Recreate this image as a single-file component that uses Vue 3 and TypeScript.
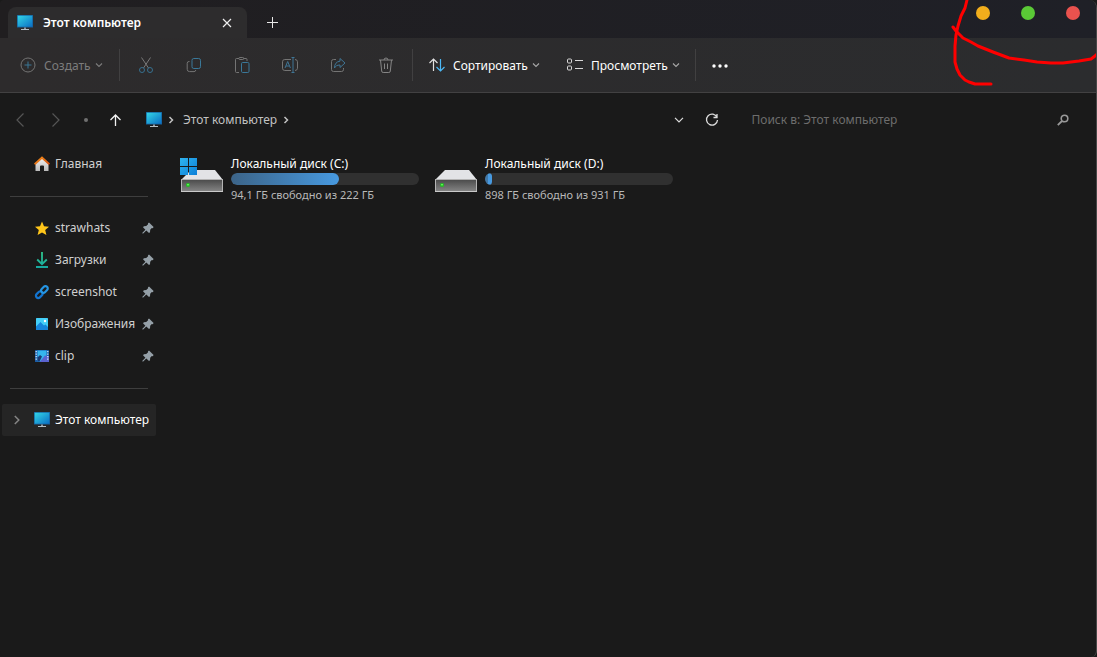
<script setup lang="ts">
import { ref } from 'vue'

interface Place {
  id: string
  label: string
}

interface Drive {
  id: string
  name: string
  free: string
  used: number
  system: boolean
}

const search = ref('')

const pinned: Place[] = [
  { id: 'star', label: 'strawhats' },
  { id: 'download', label: 'Загрузки' },
  { id: 'link', label: 'screenshot' },
  { id: 'pictures', label: 'Изображения' },
  { id: 'film', label: 'clip' },
]

const drives: Drive[] = [
  { id: 'c', name: 'Локальный диск (C:)', free: '94,1 ГБ свободно из 222 ГБ', used: 57.6, system: true },
  { id: 'd', name: 'Локальный диск (D:)', free: '898 ГБ свободно из 931 ГБ', used: 3.5, system: false },
]
</script>

<template>
  <div class="window">
    <svg class="defs" width="0" height="0" aria-hidden="true">
      <defs>
        <linearGradient id="g-screen" x1="0" y1="0" x2="1" y2="1">
          <stop offset="0" stop-color="#33d6e6" />
          <stop offset="1" stop-color="#0b6fc4" />
        </linearGradient>
        <linearGradient id="g-teal" x1="0" y1="0" x2="0" y2="1">
          <stop offset="0" stop-color="#2fc88c" />
          <stop offset="1" stop-color="#18a9a0" />
        </linearGradient>
        <linearGradient id="g-house" x1="0" y1="0" x2="0" y2="1">
          <stop offset="0" stop-color="#f2f2f2" />
          <stop offset="1" stop-color="#b9b9b9" />
        </linearGradient>
        <linearGradient id="g-roof" x1="0" y1="0" x2="1" y2="1">
          <stop offset="0" stop-color="#f99a1c" />
          <stop offset="1" stop-color="#d0470f" />
        </linearGradient>
        <linearGradient id="g-drive" x1="0" y1="0" x2="0" y2="1">
          <stop offset="0" stop-color="#4a4a4a" />
          <stop offset="1" stop-color="#858585" />
        </linearGradient>
        <linearGradient id="g-win" x1="0" y1="0" x2="1" y2="1">
          <stop offset="0" stop-color="#2fb4f0" />
          <stop offset="1" stop-color="#0b7fd8" />
        </linearGradient>
        <symbol id="s-monitor" viewBox="0 0 16 16">
          <rect x="0" y="0" width="16" height="12.5" fill="#155f9c" />
          <rect x="0.7" y="0.7" width="14.6" height="11" fill="url(#g-screen)" />
          <path d="M7 12.5h2v1.500H7z" fill="#8795a0" />
          <path d="M4 14h8v1H4z" fill="#b4bdc4" />
        </symbol>
        <symbol id="s-down" viewBox="0 0 8 8">
          <path d="M1 2.5 4 5.5 7 2.5" fill="none" stroke="currentColor" stroke-width="1.1" />
        </symbol>
        <symbol id="s-right" viewBox="0 0 8 8">
          <path d="M2.5 1 5.5 4 2.5 7" fill="none" stroke="currentColor" stroke-width="1.5" />
        </symbol>
        <symbol id="s-pin" viewBox="0 0 12 12">
          <path d="M7 0.5 11.6 5.1 10.8 6.2 9.8 6 8.2 7.8 8 10.2 7 11 4.3 8.6 1.2 11.5 0.4 11.5 0.4 10.8 3.4 7.7 1 5.2 1.9 4.2 4.2 4 6.1 2.3 5.9 1.4Z" fill="#95a0a8" />
        </symbol>
      </defs>
    </svg>

    <header class="titlebar">
      <div class="tab">
        <svg class="icon16"><use href="#s-monitor" /></svg>
        <span class="tab-title">Этот компьютер</span>
        <button class="tab-close" aria-label="Закрыть вкладку">
          <svg width="10" height="10" viewBox="0 0 10 10"><path d="M1 1 9 9M9 1 1 9" stroke="#eee" stroke-width="1.2" /></svg>
        </button>
      </div>
      <button class="tab-new" aria-label="Новая вкладка">
        <svg width="11" height="11" viewBox="0 0 11 11"><path d="M5.5 0v11M0 5.5h11" stroke="#e8e8e8" /></svg>
      </button>
      <div class="controls">
        <button class="dot yellow" aria-label="Свернуть"></button>
        <button class="dot green" aria-label="Развернуть"></button>
        <button class="dot red" aria-label="Закрыть"></button>
      </div>
    </header>

    <div class="toolbar" role="toolbar" aria-label="Команды">
      <button class="command create">
        <svg class="icon16" viewBox="0 0 16 16" fill="none">
          <circle cx="8" cy="8" r="7" stroke="#747474" /><path d="M8 4.5v7M4.5 8h7" stroke="#3b7695" />
        </svg>
        <span>Создать</span>
        <svg class="chevron"><use href="#s-down" /></svg>
      </button>
      <span class="divider"></span>
      <div class="tools">
        <button class="tool" aria-label="Вырезать">
          <svg class="icon16" viewBox="0 0 16 16" fill="none">
            <path d="M3.5 0.5 10.5 11M12.5 0.5 5.5 11" stroke="#787878" />
            <circle cx="4" cy="13" r="2.5" stroke="#37708f" /><circle cx="12" cy="13" r="2.5" stroke="#37708f" />
          </svg>
        </button>
        <button class="tool" aria-label="Копировать">
          <svg class="icon16" viewBox="0 0 16 16" fill="none">
            <path d="M3.5 4.5H3A1.8 1.8 0 0 0 1.2 6.3v6A2.3 2.3 0 0 0 3.5 14.6H8A1.8 1.8 0 0 0 9.8 13" stroke="#747474" />
            <rect x="6" y="1.5" width="8.5" height="10" rx="1.8" stroke="#3a7899" />
          </svg>
        </button>
        <button class="tool" aria-label="Вставить">
          <svg class="icon16" viewBox="0 0 16 16" fill="none">
            <path d="M5 1.5H2.5a1 1 0 0 0-1 1v12a1 1 0 0 0 1 1H5M9.5 1.5H12a1 1 0 0 1 1 1V4M4.8 1.5a1 1 0 0 1 1-1h3a1 1 0 0 1 1 1 1 1 0 0 1-1 1h-3a1 1 0 0 1-1-1Z" stroke="#747474" />
            <rect x="7.5" y="5.5" width="7.5" height="10" rx="1.2" stroke="#3a7899" />
          </svg>
        </button>
        <button class="tool" aria-label="Переименовать">
          <svg class="icon16" viewBox="0 0 16 16" fill="none">
            <path d="M9 2.5H2.8A2.3 2.3 0 0 0 .5 4.8v6.4A2.3 2.3 0 0 0 2.8 13.5H9M13 2.5a2.5 2.5 0 0 1 2.5 2.3v6.4a2.5 2.5 0 0 1-2.5 2.3" stroke="#747474" />
            <path d="M3 11 5.7 4.5 8.4 11M4 9h3.4M11 .5v15M9.5 .5h3M9.5 15.5h3" stroke="#3f7595" />
          </svg>
        </button>
        <button class="tool" aria-label="Поделиться">
          <svg class="icon16" viewBox="0 0 16 16" fill="none">
            <path d="M6 2.5H3.5A2 2 0 0 0 1.5 4.5v8a2 2 0 0 0 2 2h8a2 2 0 0 0 2-2V11" stroke="#747474" />
            <path d="M10 1.5 15 6 10 10.5V8C7 8 5.5 9 4.5 11 4.5 7 6.5 4.5 10 4.2Z" stroke="#3f7595" />
          </svg>
        </button>
        <button class="tool" aria-label="Удалить">
          <svg class="icon16" viewBox="0 0 16 16" fill="none">
            <path d="M1 3h14M6 3a2 2 0 0 1 4 0M2.5 3l1.2 11a1.5 1.5 0 0 0 1.5 1.5h5.6a1.5 1.5 0 0 0 1.5-1.5L13.5 3M6.5 6.5v5.5M9.5 6.5v5.5" stroke="#858585" />
          </svg>
        </button>
      </div>
      <span class="divider"></span>
      <button class="command bright sort">
        <svg class="icon16" viewBox="0 0 16 16" fill="none">
          <path d="M4.5 14V2M.5 6 4.5 2 8.5 6" stroke="#e0e0e0" stroke-width="1.2" />
          <path d="M11.5 2v12M7.5 10l4 4 4-4" stroke="#4cb8f5" stroke-width="1.2" />
        </svg>
        <span>Сортировать</span>
        <svg class="chevron"><use href="#s-down" /></svg>
      </button>
      <button class="command bright view">
        <svg class="icon16" viewBox="0 0 16 16" fill="none">
          <rect x=".5" y="2" width="4" height="4" rx="1" stroke="#d8d8d8" /><rect x=".5" y="9" width="4" height="4" rx="1" stroke="#d8d8d8" />
          <path d="M8 3.5h8M8 11.5h8" stroke="#d8d8d8" />
        </svg>
        <span>Просмотреть</span>
        <svg class="chevron"><use href="#s-down" /></svg>
      </button>
      <span class="divider"></span>
      <button class="tool" aria-label="Подробнее">
        <svg width="18" height="16" viewBox="0 0 18 16" fill="#fff"><circle cx="3" cy="9" r="1.7" /><circle cx="9" cy="9" r="1.7" /><circle cx="15" cy="9" r="1.7" /></svg>
      </button>
    </div>

    <nav class="navbar" aria-label="Навигация">
      <div class="history">
        <button class="step" aria-label="Назад"><svg width="8" height="14" viewBox="0 0 8 14"><path d="M7.5 .5 1 7l6.5 6.5" fill="none" stroke="#555" stroke-width="1.2" /></svg></button>
        <button class="step" aria-label="Вперёд"><svg width="8" height="14" viewBox="0 0 8 14"><path d="M.5 .5 7 7 .5 13.5" fill="none" stroke="#555" stroke-width="1.2" /></svg></button>
        <button class="step small" aria-label="Последние расположения"><span class="recent"></span></button>
        <button class="step" aria-label="Вверх"><svg width="12" height="12" viewBox="0 0 12 12"><path d="M5.500 12V1M.5 6l5-5 5 5" fill="none" stroke="#f2f2f2" stroke-width="1.3" /></svg></button>
      </div>
      <div class="address">
        <svg class="icon16"><use href="#s-monitor" /></svg>
        <svg class="chevron"><use href="#s-right" /></svg>
        <a class="crumb" href="#">Этот компьютер</a>
        <svg class="chevron"><use href="#s-right" /></svg>
        <button class="expand" aria-label="Предыдущие расположения"><svg width="10" height="6" viewBox="0 0 10 6"><path d="M1 .8 5 4.8 9 .8" fill="none" stroke="#ddd" stroke-width="1.2" /></svg></button>
        <button class="refresh" aria-label="Обновить"><svg width="14" height="14" viewBox="0 0 14 14"><path d="M12 4.3A5.5 5.5 0 1 0 12.5 7M12 1v3.5H8.5" fill="none" stroke="#ddd" stroke-width="1.3" /></svg></button>
      </div>
      <label class="search">
        <input v-model="search" type="text" aria-label="Поиск" placeholder="Поиск в: Этот компьютер" />
        <svg width="12" height="12" viewBox="0 0 12 12" fill="none" stroke="#999"><circle cx="7.5" cy="4.5" r="3.3" stroke-width="1.6" /><path d="M5 7 .8 11.2" stroke-width="1.8" /></svg>
      </label>
    </nav>

    <div class="content">
      <aside class="sidebar">
        <a class="place" href="#">
          <svg class="icon16" viewBox="0 0 16 16">
            <path d="M1.5 7.5 8 2l6.5 5.5V15H10v-4.5a1 1 0 0 0-1-1H7a1 1 0 0 0-1 1V15H1.5Z" fill="url(#g-house)" />
            <path d="M8 .2 16 7.6 14.8 9 8 3 1.2 9 0 7.6Z" fill="url(#g-roof)" />
          </svg>
          <span>Главная</span>
        </a>
        <hr />
        <a v-for="place in pinned" :key="place.id" class="place" href="#">
          <svg class="icon16" viewBox="0 0 16 16">
            <path v-if="place.id === 'star'" d="M8 1.5 10 6.2l5 .5-3.8 3.3 1.2 5L8 12.4 3.6 15l1.2-5L1 6.7l5-.5Z" fill="#ffc61a" />
            <path v-else-if="place.id === 'download'" d="M8 0v12M3.2 7.5 8 12.2l4.8-4.7M2 15h12" fill="none" stroke="url(#g-teal)" stroke-width="1.8" />
            <g v-else-if="place.id === 'link'" fill="none" stroke-width="2.2">
              <rect x="-3.8" y="-2.3" width="7.6" height="4.6" rx="2.3" transform="translate(5.3 10.7) rotate(-45)" stroke="#1374cf" />
              <rect x="-3.8" y="-2.3" width="7.6" height="4.6" rx="2.3" transform="translate(10.4 5.5) rotate(-45)" stroke="#2596e4" />
            </g>
            <g v-else-if="place.id === 'pictures'">
              <rect x="2" y="2" width="12" height="12" rx=".6" fill="#43cff8" />
              <path d="M2 10.5 6.5 6 10 9.5 11.5 8.5 14 11v3H2Z" fill="#1686dc" />
              <circle cx="11" cy="5" r="1.2" fill="#fff" />
            </g>
            <g v-else>
              <rect x="1" y="2" width="14" height="12" rx=".6" fill="#1c5ca6" />
              <path d="M3.5 2.5h9v11h-9Z" fill="#35b5ee" />
              <path d="M3.5 9.500 6 7 8 8.500 5.500 13.500h-2Z" fill="#1d3a72" />
              <path d="M6 13.500 11 7.500 15 8v6H6Z" fill="#5a62cf" />
              <path d="M2.2 3v10M13.8 3v10" stroke="#e5f6ff" stroke-width="1.2" stroke-dasharray="1.2 1.3" />
            </g>
          </svg>
          <span>{{ place.label }}</span>
          <svg class="pin"><use href="#s-pin" /></svg>
        </a>
        <hr />
        <a class="place current" href="#" aria-current="page">
          <svg class="branch" width="6" height="10" viewBox="0 0 6 10"><path d="M.8 1 4.8 5 .8 9" fill="none" stroke="#858585" stroke-width="1.5" /></svg>
          <svg class="icon16"><use href="#s-monitor" /></svg>
          <span>Этот компьютер</span>
        </a>
      </aside>

      <main class="drives">
        <a v-for="drive in drives" :key="drive.id" class="drive" href="#">
          <svg class="drive-icon" viewBox="0 0 44 36">
            <path d="M11 13h24l8 10H1Z" fill="#e2e3e6" />
            <rect x="1.5" y="22.5" width="41" height="12" fill="url(#g-drive)" stroke="#b4b4b4" />
            <path d="M1 34.5h42" stroke="#c9c9c9" />
            <circle cx="8" cy="28" r="2" fill="#1fc41f" /><circle cx="8" cy="27.7" r=".8" fill="#8dff7d" />
            <path v-if="drive.system" d="M0 1h8v8H0ZM9 1h8v8H9ZM0 10h8v8H0ZM9 10h8v8H9Z" fill="url(#g-win)" />
          </svg>
          <span class="info">
            <span class="name">{{ drive.name }}</span>
            <span class="bar" role="progressbar" :aria-label="drive.name" :aria-valuenow="drive.used" aria-valuemin="0" aria-valuemax="100">
              <span class="fill" :class="{ low: drive.used < 10 }" :style="{ width: drive.used + '%' }"></span>
            </span>
            <span class="free">{{ drive.free }}</span>
          </span>
        </a>
      </main>
    </div>

    <svg class="marker" width="146" height="86" viewBox="0 0 146 86" fill="none" stroke="#fe0000" stroke-width="3" stroke-linecap="round" stroke-linejoin="round" aria-hidden="true">
      <path d="M16 0 14 8 10 16 7 26 5 35 4 46V62L6 69 9 75 14 80 18 82 24 84H40" />
      <path d="M2 27 5 31 12 38 20 42 27 46 42 52 58 58 73 60 86 62 100 63H112L128 61 140 59 144 56 148 52" />
    </svg>
  </div>
</template>

<style>
body {
  margin: 0;
  background: #1a1a1a;
}
</style>

<style scoped>
.window {
  position: relative;
  box-sizing: border-box;
  min-height: 100vh;
  overflow: hidden;
  background: #1a1a1a;
  border-right: 1px solid #484848;
  border-radius: 4px 8px 6px 6px;
  color: #cfcfcf;
  font: 12px/16px "Noto Sans", "Open Sans", sans-serif;
}
.defs {
  position: absolute;
}
button {
  display: flex;
  align-items: center;
  justify-content: center;
  padding: 0;
  border: 0;
  background: none;
  color: inherit;
  font: inherit;
}
a {
  color: inherit;
  text-decoration: none;
}
svg {
  flex: none;
}
.icon16 {
  width: 16px;
  height: 16px;
}
.chevron {
  width: 8px;
  height: 8px;
}

.titlebar {
  display: flex;
  height: 38px;
  padding-left: 8px;
  background: linear-gradient(90deg, #201e20, #1f2027);
}
.tab {
  display: flex;
  align-items: center;
  box-sizing: border-box;
  width: 239px;
  margin-top: 7px;
  padding: 0 10px 0 9px;
  border-radius: 8px 8px 0 0;
  background: #2d2c2d;
  color: #fff;
}
.tab-title {
  flex: 1;
  margin-left: 10px;
  font-weight: 600;
}
.tab-close {
  width: 20px;
  height: 20px;
}
.tab-new {
  width: 30px;
  height: 30px;
  margin: 7px 0 0 10px;
}
.controls {
  display: flex;
  gap: 31px;
  margin-left: auto;
  padding: 6px 16px 0 0;
}
.dot {
  width: 14px;
  height: 14px;
  border-radius: 50%;
}
.yellow {
  background: #f2ae1c;
}
.green {
  background: #5ac936;
}
.red {
  background: #ea524e;
}

.toolbar {
  display: flex;
  align-items: center;
  height: 54px;
  padding-left: 20px;
  border-bottom: 1px solid #424142;
  background: linear-gradient(90deg, #2d2b2c, #2b2c2e);
}
.divider {
  width: 1px;
  height: 32px;
  background: #414041;
}
.command {
  justify-content: flex-start;
  height: 32px;
  color: #7c7c7c;
}
.command .chevron {
  margin-left: 4px;
}
.create {
  width: 99px;
}
.command span {
  margin-left: 8px;
  padding-top: 2px;
}
.bright {
  color: #fff;
}
.bright .chevron {
  color: #a8a8a8;
}
.sort {
  width: 138px;
  margin-left: 16px;
}
.view {
  width: 128px;
}
.tools {
  display: flex;
  padding: 0 2px;
}
.tool {
  width: 48px;
  height: 32px;
}

.navbar {
  display: flex;
  align-items: center;
  height: 53px;
}
.history {
  display: flex;
  padding: 0 12px 0 2px;
}
.step {
  width: 36px;
  height: 32px;
}
.step.small {
  width: 24px;
}
.recent {
  width: 4px;
  height: 4px;
  border-radius: 50%;
  background: #707070;
}
.address {
  display: flex;
  align-items: center;
  flex: 588 1 0;
  min-width: 240px;
  color: #c2c2c2;
}
.address .chevron {
  margin: 0 5px;
}
.crumb {
  margin: 0 0 0 3px;
}
.expand {
  width: 32px;
  height: 32px;
  margin-left: auto;
}
.refresh {
  width: 34px;
  height: 32px;
}
.search {
  display: flex;
  align-items: center;
  flex: 320 1 0;
  box-sizing: border-box;
  padding: 0 27px 0 22px;
}
.search input {
  flex: 1;
  min-width: 0;
  padding: 0;
  border: 0;
  outline: 0;
  background: none;
  color: #ddd;
  font: inherit;
}
.search input::placeholder {
  color: #6d6d6d;
  opacity: 1;
}

.content {
  display: flex;
  padding-top: 2px;
}
.sidebar {
  width: 156px;
  flex: none;
}
.place {
  display: flex;
  align-items: center;
  box-sizing: border-box;
  height: 32px;
  margin-left: 2px;
  padding: 0 2px 0 32px;
}
.place span {
  flex: 1;
  margin-left: 5px;
  white-space: nowrap;
}
.pin {
  width: 12px;
  height: 12px;
}
.sidebar hr {
  height: 1px;
  margin: 16px 8px 15px 10px;
  border: 0;
  background: #3e3e3e;
}
.current {
  padding-left: 12px;
  border-radius: 2px;
  background: #252525;
  color: #fff;
}
.branch {
  margin-right: 14px;
}
.drives {
  display: flex;
  flex: 1;
  flex-wrap: wrap;
  align-content: flex-start;
  padding: 8px 0 0 24px;
}
.drive {
  display: flex;
  gap: 7px;
  width: 254px;
}
.drive-icon {
  width: 44px;
  height: 36px;
  margin-top: 1px;
}
.info {
  display: flex;
  flex-direction: column;
  width: 188px;
}
.name {
  color: #fff;
}
.bar {
  height: 12px;
  margin: 1px 0 2px;
  border-radius: 6px;
  background: #303030;
  overflow: hidden;
}
.fill {
  display: block;
  height: 12px;
  border-radius: 6px;
  background: linear-gradient(90deg, #3c6488, #4799df);
}
.fill.low {
  background: linear-gradient(90deg, #4177a6 50%, #4799df 50%);
}
.free {
  color: #b8b8b8;
  font-size: 11px;
  white-space: nowrap;
}
.marker {
  position: absolute;
  top: 0;
  right: -1px;
  pointer-events: none;
}
</style>
